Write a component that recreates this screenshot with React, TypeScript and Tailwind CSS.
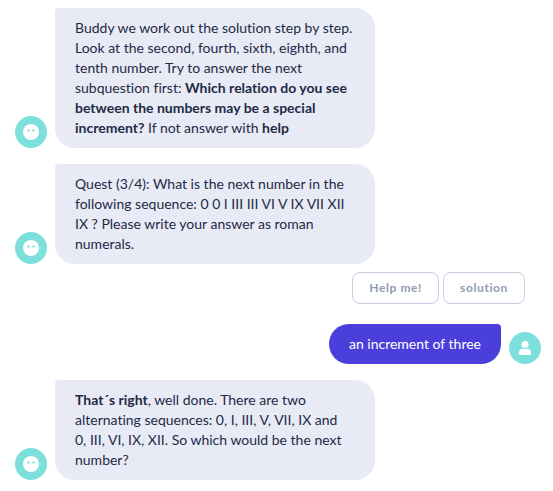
import type { ReactNode } from "react";

function BotAvatar() {
  return (
    <div className="flex size-8 shrink-0 items-center justify-center rounded-full bg-[#7de0dd]">
      <svg viewBox="0 0 16 16" className="size-4" role="img" aria-label="Bot">
        <circle cx="8" cy="8" r="8" fill="#fff" />
        <path
          d="M5.5 5l.5 1 1 .5-1 .5-.5 1-.5-1-1-.5 1-.5zM10.500 5l.5 1 1 .5-1 .5-.5 1-.5-1-1-.5 1-.5z"
          fill="#7de0dd"
          stroke="#7de0dd"
          strokeWidth=".3"
        />
      </svg>
    </div>
  );
}

function UserAvatar() {
  return (
    <div className="flex size-8 shrink-0 items-center justify-center rounded-full bg-[#7de0dd]">
      <svg viewBox="0 0 16 16" className="size-4" fill="#fff" role="img" aria-label="You">
        <circle cx="8" cy="4.500" r="3.600" />
        <path d="M2 13C2 10.200 3.600 8.800 6 8.800c1.400.6 2.600.6 4 0 2.400 0 4 1.400 4 4.200v.7c0 .8-.5 1.300-1.300 1.300H3.300C2.500 15 2 14.500 2 13.700z" />
      </svg>
    </div>
  );
}

function BotMessage({ children }: { children: ReactNode }) {
  return (
    <div className="flex items-end gap-2">
      <BotAvatar />
      <p className="w-80 rounded-[20px] rounded-tl-[4px] bg-[#e8eaf6] px-5 py-2.5 text-[#222b45]">
        {children}
      </p>
    </div>
  );
}

function QuickReply({ children }: { children: ReactNode }) {
  return (
    <button
      type="button"
      className="h-8 rounded-lg border border-[#c5cee0] bg-white px-4 text-xs font-bold tracking-wider text-[#8f9bb3]"
    >
      {children}
    </button>
  );
}

export default function App() {
  return (
    <main className="flex flex-col gap-4 bg-white py-2 pr-3 pl-[15px] font-['Lato',sans-serif] text-sm leading-5 [font-variant-ligatures:none]">
      <BotMessage>
        Buddy we work out the solution step by step. Look at the second, fourth, sixth, eighth, and
        tenth number. Try to answer the next subquestion first:{" "}
        <strong>Which relation do you see between the numbers may be a special increment?</strong>{" "}
        If not answer with <strong>help</strong>
      </BotMessage>
      <div className="flex flex-col gap-2">
        <BotMessage>
          Quest (3/4): What is the next number in the following sequence: 0 0 I III III VI V IX VII
          XII IX ? Please write your answer as roman numerals.
        </BotMessage>
        <div className="flex justify-end gap-1 pr-4 pb-1">
          <QuickReply>Help me!</QuickReply>
          <QuickReply>solution</QuickReply>
        </div>
      </div>
      <div className="flex items-end justify-end gap-2">
        <p className="rounded-[20px] rounded-tr-[4px] bg-[#4b3fdb] px-5 py-2.5 text-white">
          an increment of three
        </p>
        <UserAvatar />
      </div>
      <BotMessage>
        <strong>That´s right</strong>, well done. There are two alternating sequences: 0, I, III, V,
        VII, IX and
        <br />
        0, III, VI, IX, XII. So which would be the next number?
      </BotMessage>
    </main>
  );
}
